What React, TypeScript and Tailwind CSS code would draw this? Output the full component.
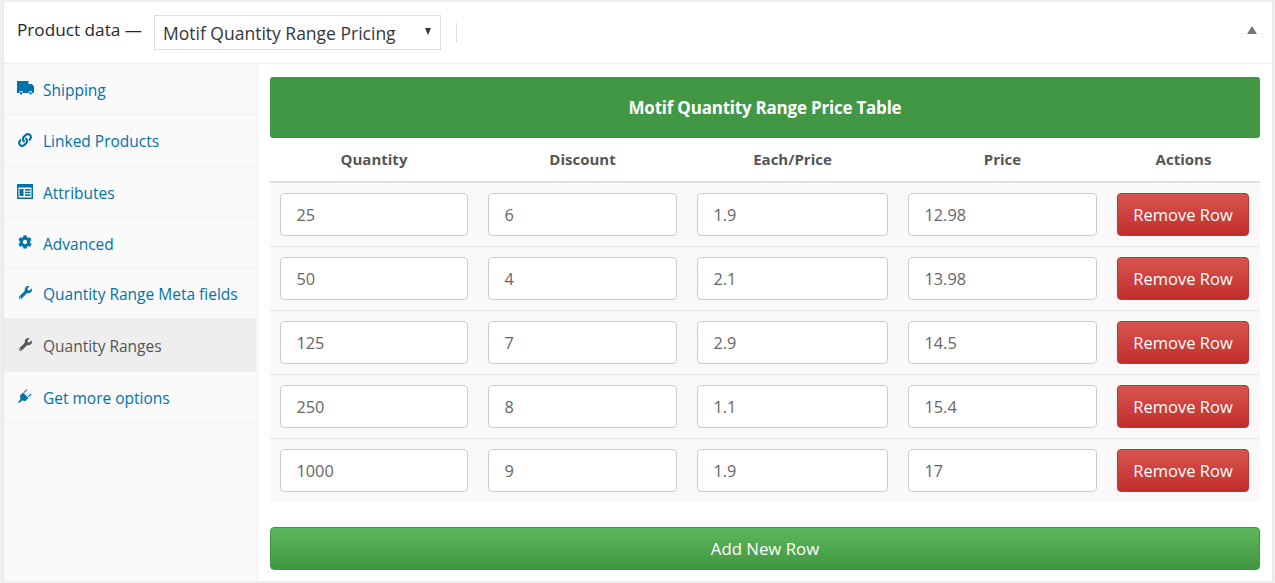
import { FaLink, FaCog, FaWrench } from 'react-icons/fa'

const TruckIcon = () => (
  <svg width="17" height="14" viewBox="0 0 17 14" fill="currentColor">
    <path d="M0 0h11.5v3H15l2 2.5V12h-1.6a1.9 1.9 0 0 0-3.8 0H6a1.9 1.9 0 0 0-3.8 0H0z" />
    <circle cx="4.1" cy="12.2" r="1.2" />
    <circle cx="13.5" cy="12.2" r="1.2" />
  </svg>
)

const FormIcon = () => (
  <svg width="16" height="15" viewBox="0 0 16 15" fill="currentColor">
    <path fillRule="evenodd" d="M0 0h16v15H0zM1.5 3.5v10h13v-10z" />
    <rect x="2.5" y="5" width="4" height="7" />
    <rect x="8" y="5" width="5.5" height="1.6" />
    <rect x="8" y="7.7" width="5.5" height="1.6" />
    <rect x="8" y="10.4" width="5.5" height="1.6" />
  </svg>
)

const PlugIcon = () => (
  <svg width="14" height="14" viewBox="0 0 14 14" fill="currentColor">
    <path d="M0 14l2.4-4.2-.4-3.3L5 3.6l5.4 5.4-2.9 3-3.3-.4L1 14z" />
    <path d="M5.6 3.2L8.4.4c.5-.5 1.2.2.7.7L6.3 3.9zM9.9 7.6l2.8-2.8c.5-.5 1.2.2.7.7l-2.8 2.8z" />
  </svg>
)

const tabs = [
  { label: 'Shipping', icon: <TruckIcon />, height: 'h-[51px]' },
  { label: 'Linked Products', icon: <FaLink size={14} />, height: 'h-[52px]' },
  { label: 'Attributes', icon: <FormIcon />, height: 'h-[51px]' },
  { label: 'Advanced', icon: <FaCog size={14} />, height: 'h-[51px]' },
  { label: 'Quantity Range Meta fields', icon: <FaWrench size={13} />, height: 'h-[50px]' },
  { label: 'Quantity Ranges', icon: <FaWrench size={13} />, height: 'h-[53px]', active: true },
  { label: 'Get more options', icon: <PlugIcon />, height: 'h-[51px]' },
]

const rows = [
  ['25', '6', '1.9', '12.98'],
  ['50', '4', '2.1', '13.98'],
  ['125', '7', '2.9', '14.5'],
  ['250', '8', '1.1', '15.4'],
  ['1000', '9', '1.9', '17'],
]

const headers = ['Quantity', 'Discount', 'Each/Price', 'Price', 'Actions']

const font = { fontFamily: '"Open Sans", sans-serif' }

export default function App() {
  return (
    <div className="h-[583px] w-[1275px] bg-[#efefef] px-[3px] py-[2px] text-[#555]" style={font}>
      <div className="flex h-full w-[1270px] flex-col border-x border-[#e5e5e5] bg-white">
        <header className="flex h-[62px] shrink-0 items-center border-b border-[#eeeeee] pl-[13px] pr-[15px]">
          <span className="pb-[5px] text-[17.2px] text-[#23282d]">Product data —</span>
          <div className="relative ml-[12px] flex h-[35px] w-[287px] items-center border border-[#dddddd] pl-[8px] pt-[1px] text-[17.5px] text-[#32373c]">
            Motif Quantity Range Pricing
            <span className="absolute right-[9px] top-[12px] h-0 w-0 border-x-[3.5px] border-t-[7px] border-x-transparent border-t-[#32373c]" />
          </div>
          <div className="ml-[15px] h-[19px] w-px bg-[#dddddd]" />
          <span className="mb-[5px] ml-auto h-0 w-0 border-x-[5px] border-b-[8px] border-x-transparent border-b-[#72777c]" />
        </header>
        <div className="flex min-h-0 flex-1">
          <nav className="w-[254px] shrink-0 border-r border-[#eeeeee] bg-[#fafafa] pr-px">
            {tabs.map((tab) => (
              <div
                key={tab.label}
                className={`${tab.height} flex items-center border-b border-[#f0f0f0] text-[15.5px] ${tab.active ? 'bg-[#eeeeee] text-[#555]' : 'text-[#0073aa]'}`}
              >
                <span className="flex w-[39px] justify-center pb-[2px] pl-[3px]">{tab.icon}</span>
                <span className="pt-[3px]">{tab.label}</span>
              </div>
            ))}
          </nav>
          <main className="min-w-0 flex-1 px-[12px] pt-[13px]">
            <div className="flex h-[61px] items-center justify-center rounded-[3px] bg-[#419743] text-[17px] font-bold tracking-[-0.22px] text-white">
              Motif Quantity Range Price Table
            </div>
            <table className="w-[990px] table-fixed border-collapse">
              <colgroup>
                <col className="w-[208px]" />
                <col className="w-[209px]" />
                <col className="w-[211px]" />
                <col className="w-[209px]" />
                <col className="w-[153px]" />
              </colgroup>
              <thead>
                <tr className="h-[44px] border-b-2 border-[#e0e0e0]">
                  {headers.map((h) => (
                    <th key={h} className="text-center text-[15px] font-bold">
                      {h}
                    </th>
                  ))}
                </tr>
              </thead>
              <tbody>
                {rows.map((row, i) => (
                  <tr key={i} className="h-[64px] border-b border-[#e5e5e5] bg-[#f9f9f9] last:border-b-0">
                    {row.map((value, j) => (
                      <td key={j} className="px-[10px] align-middle">
                        <div className="flex h-[43px] items-center rounded-[4px] border border-[#cccccc] bg-white pl-[15.5px] pt-[2px] text-[16.3px] text-[#666]">
                          {value}
                        </div>
                      </td>
                    ))}
                    <td className="pl-[10px] pr-[11px]">
                      <button className="flex h-[43px] w-[132px] items-center justify-center rounded-[4px] border border-[#c9302c] bg-gradient-to-b from-[#d9534f] to-[#c12e2a] pt-[2px] text-[16.5px] text-white">
                        Remove Row
                      </button>
                    </td>
                  </tr>
                ))}
              </tbody>
            </table>
            <button className="mt-[25px] flex h-[43px] w-[990px] items-center justify-center rounded-[4px] border border-[#419641] bg-gradient-to-b from-[#5cb85c] to-[#419641] pt-[1px] text-[16.8px] text-white">
              Add New Row
            </button>
          </main>
        </div>
      </div>
    </div>
  )
}
